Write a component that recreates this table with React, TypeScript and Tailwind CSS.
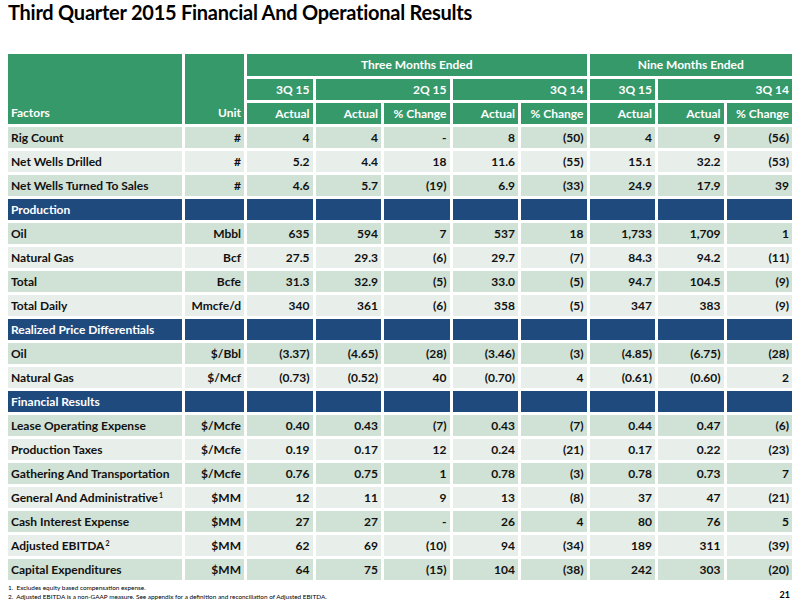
import React from "react";

type Row = { section: string } | { cells: string[]; sup?: string };

const rows: Row[] = [
    { cells: ["Rig Count", "#", "4", "4", "-", "8", "(50)", "4", "9", "(56)"] },
    { cells: ["Net Wells Drilled", "#", "5.2", "4.4", "18", "11.6", "(55)", "15.1", "32.2", "(53)"] },
    { cells: ["Net Wells Turned To Sales", "#", "4.6", "5.7", "(19)", "6.9", "(33)", "24.9", "17.9", "39"] },
    { section: "Production" },
    { cells: ["Oil", "Mbbl", "635", "594", "7", "537", "18", "1,733", "1,709", "1"] },
    { cells: ["Natural Gas", "Bcf", "27.5", "29.3", "(6)", "29.7", "(7)", "84.3", "94.2", "(11)"] },
    { cells: ["Total", "Bcfe", "31.3", "32.9", "(5)", "33.0", "(5)", "94.7", "104.5", "(9)"] },
    { cells: ["Total Daily", "Mmcfe/d", "340", "361", "(6)", "358", "(5)", "347", "383", "(9)"] },
    { section: "Realized Price Differentials" },
    { cells: ["Oil", "$/Bbl", "(3.37)", "(4.65)", "(28)", "(3.46)", "(3)", "(4.85)", "(6.75)", "(28)"] },
    { cells: ["Natural Gas", "$/Mcf", "(0.73)", "(0.52)", "40", "(0.70)", "4", "(0.61)", "(0.60)", "2"] },
    { section: "Financial Results" },
    { cells: ["Lease Operating Expense", "$/Mcfe", "0.40", "0.43", "(7)", "0.43", "(7)", "0.44", "0.47", "(6)"] },
    { cells: ["Production Taxes", "$/Mcfe", "0.19", "0.17", "12", "0.24", "(21)", "0.17", "0.22", "(23)"] },
    { cells: ["Gathering And Transportation", "$/Mcfe", "0.76", "0.75", "1", "0.78", "(3)", "0.78", "0.73", "7"] },
    { cells: ["General And Administrative", "$MM", "12", "11", "9", "13", "(8)", "37", "47", "(21)"], sup: "1" },
    { cells: ["Cash Interest Expense", "$MM", "27", "27", "-", "26", "4", "80", "76", "5"] },
    { cells: ["Adjusted EBITDA", "$MM", "62", "69", "(10)", "94", "(34)", "189", "311", "(39)"], sup: "2" },
    { cells: ["Capital Expenditures", "$MM", "64", "75", "(15)", "104", "(38)", "242", "303", "(20)"] },
];

const green = "bg-[#36996a] text-white";

export default function App() {
    let stripe = 0;
    return (
        <div className="w-[800px] h-[600px] bg-white px-[8px] text-[#111] font-['Lato',sans-serif] overflow-hidden">
            <h1 className="h-[54px] pt-[2px] text-[20px] leading-[20px] font-bold text-black tracking-[-0.25px]">
                Third Quarter 2015 Financial And Operational Results
            </h1>

            <div className="grid grid-cols-[174px_59px_repeat(8,1fr)] grid-rows-[22px_repeat(21,21px)] gap-[3px] text-[12px] font-bold leading-none">
                {/* header */}
                <div className={`${green} row-span-3 flex items-end px-[3px] pb-[5px]`}>Factors</div>
                <div className={`${green} row-span-3 flex items-end justify-end px-[3px] pb-[5px]`}>Unit</div>
                <div className={`${green} col-span-5 flex items-center justify-center`}>Three Months Ended</div>
                <div className={`${green} col-span-3 flex items-center justify-center`}>Nine Months Ended</div>

                <div className={`${green} flex items-center justify-end px-[3px]`}>3Q 15</div>
                <div className={`${green} col-span-2 flex items-center justify-end px-[3px]`}>2Q 15</div>
                <div className={`${green} col-span-2 flex items-center justify-end px-[3px]`}>3Q 14</div>
                <div className={`${green} flex items-center justify-end px-[3px]`}>3Q 15</div>
                <div className={`${green} col-span-2 flex items-center justify-end px-[3px]`}>3Q 14</div>

                {["Actual", "Actual", "% Change", "Actual", "% Change", "Actual", "Actual", "% Change"].map((h, i) => (
                    <div key={i} className={`${green} flex items-center justify-end px-[3px]`}>{h}</div>
                ))}

                {rows.map((row, r) => {
                    if ("section" in row) {
                        stripe = 0;
                        return Array.from({ length: 10 }).map((_, c) => (
                            <div key={`${r}-${c}`} className="bg-[#1f4a7e] text-white flex items-center px-[3px]">
                                {c === 0 ? row.section : null}
                            </div>
                        ));
                    }
                    const bg = stripe++ % 2 === 0 ? "bg-[#d0e1d5]" : "bg-[#e8efea]";
                    return row.cells.map((cell, c) => (
                        <div key={`${r}-${c}`} className={`${bg} flex items-center px-[3px] ${c === 0 ? "" : "justify-end"}`}>
                            {cell}
                            {c === 0 && row.sup ? <sup className="text-[7px] ml-[1px] -top-[0.3em]">{row.sup}</sup> : null}
                        </div>
                    ));
                })}
            </div>

            <div className="flex justify-between mt-[3px]">
                <div className="text-[6.4px] leading-[9px] text-black">
                    <div>1.&nbsp; Excludes equity based compensation expense.</div>
                    <div>2.&nbsp; Adjusted EBITDA is a non-GAAP measure. See appendix for a definition and reconciliation of Adjusted EBITDA.</div>
                </div>
                <div className="text-[9px] font-bold text-black pt-[5px] pr-[2px]">21</div>
            </div>
        </div>
    );
}
